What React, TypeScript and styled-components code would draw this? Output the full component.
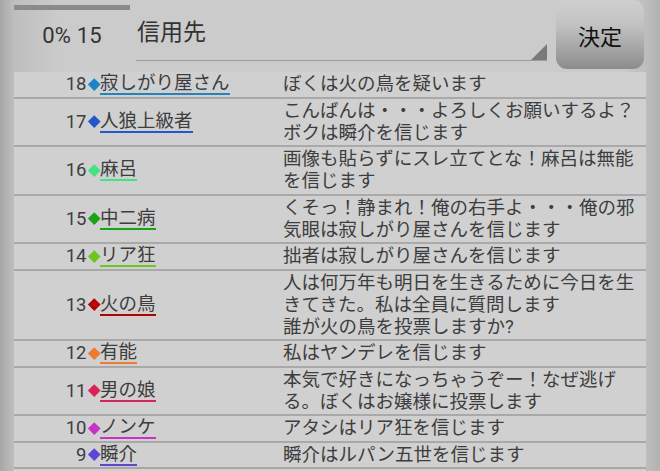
import styled, { createGlobalStyle } from "styled-components";

const GlobalStyle = createGlobalStyle`
  html, body {
    margin: 0;
    padding: 0;
  }
  body {
    font-family: Roboto, "Noto Sans CJK JP", sans-serif;
    background: #c9c9c9;
  }
`;

type Player = {
  no: number;
  name: string;
  color: string;
  lines: string[];
};

const players: Player[] = [
  { no: 18, name: "寂しがり屋さん", color: "#1a86c8", lines: ["ぼくは火の鳥を疑います"] },
  {
    no: 17,
    name: "人狼上級者",
    color: "#2456cc",
    lines: ["こんばんは・・・よろしくお願いするよ？", "ボクは瞬介を信じます"],
  },
  {
    no: 16,
    name: "麻呂",
    color: "#3fe484",
    lines: ["画像も貼らずにスレ立てとな！麻呂は無能", "を信じます"],
  },
  {
    no: 15,
    name: "中二病",
    color: "#17a417",
    lines: ["くそっ！静まれ！俺の右手よ・・・俺の邪", "気眼は寂しがり屋さんを信じます"],
  },
  { no: 14, name: "リア狂", color: "#6cc61e", lines: ["拙者は寂しがり屋さんを信じます"] },
  {
    no: 13,
    name: "火の鳥",
    color: "#b40000",
    lines: [
      "人は何万年も明日を生きるために今日を生",
      "きてきた。私は全員に質問します",
      "誰が火の鳥を投票しますか?",
    ],
  },
  { no: 12, name: "有能", color: "#f07a32", lines: ["私はヤンデレを信じます"] },
  {
    no: 11,
    name: "男の娘",
    color: "#e21e5a",
    lines: ["本気で好きになっちゃうぞー！なぜ逃げ", "る。ぼくはお嬢様に投票します"],
  },
  { no: 10, name: "ノンケ", color: "#c832c8", lines: ["アタシはリア狂を信じます"] },
  { no: 9, name: "瞬介", color: "#5a46de", lines: ["瞬介はルパン五世を信じます"] },
];

export default function App() {
  return (
    <>
      <GlobalStyle />
      <Screen>
        <Header>
          <Status>
            <Progress />
            <Percent>0% 15</Percent>
          </Status>
          <Spinner>
            <SpinnerText>信用先</SpinnerText>
            <SpinnerCorner />
          </Spinner>
          <Decide>決定</Decide>
        </Header>
        <Table>
          {players.map((p) => (
            <Row key={p.no}>
              <Lead>
                {p.no}
                <Diamond $color={p.color} />
              </Lead>
              <NameCell>
                <Name $color={p.color}>{p.name}</Name>
              </NameCell>
              <Message>
                {p.lines.map((l, i) => (
                  <div key={i}>{l}</div>
                ))}
              </Message>
            </Row>
          ))}
          <EmptyRow />
        </Table>
      </Screen>
    </>
  );
}

const Screen = styled.div`
  height: 471px;
  overflow: hidden;
  padding: 0 14px;
  box-sizing: border-box;
  background: linear-gradient(
    to right,
    #a6a6a6 0,
    #bebebe 14px,
    #cbcbcb 60px,
    #cbcbcb calc(100% - 40px),
    #bdbdbd calc(100% - 14px),
    #b2b2b2 100%
  );
`;

const Header = styled.div`
  display: flex;
  height: 72px;
`;

const Status = styled.div`
  width: 116px;
  display: flex;
  flex-direction: column;
  align-items: center;
`;

const Progress = styled.div`
  align-self: stretch;
  height: 5px;
  margin-top: 5px;
  background: #8a8a8a;
`;

const Percent = styled.div`
  margin-top: 13px;
  font-size: 22px;
  line-height: 26px;
  color: #333;
  letter-spacing: 0.2px;
`;

const Spinner = styled.div`
  position: relative;
  flex: 1;
  margin-left: 6px;
  height: 60px;
  border-bottom: 1.5px solid #9c9c9c;
`;

const SpinnerText = styled.div`
  padding: 19px 0 0 1px;
  font-size: 23px;
  line-height: 28px;
  color: #333;
`;

const SpinnerCorner = styled.div`
  position: absolute;
  right: 0;
  bottom: 0;
  width: 16px;
  height: 16px;
  background: #7a7a7a;
  clip-path: polygon(100% 0, 100% 100%, 0 100%);
`;

const Decide = styled.div`
  width: 88px;
  height: 69px;
  margin: 0 2px 0 9px;
  border-radius: 11px;
  background: linear-gradient(#cfcfcf 0%, #c3c3c3 35%, #8c8c8c 100%);
  display: flex;
  align-items: center;
  justify-content: center;
  font-size: 22px;
  color: #111;
`;

const Table = styled.div`
  background: #d0d0d0;
`;

const Row = styled.div`
  display: grid;
  grid-template-columns: 86px 183px 1fr;
  padding: 1px 0 1.5px;
  border-bottom: 2px solid #a9a9a9;
  font-size: 18.5px;
  line-height: 22px;
  color: #3d3d3d;
`;

const EmptyRow = styled.div`
  height: 26px;
`;

const Lead = styled.div`
  display: flex;
  align-items: center;
  justify-content: flex-end;
`;

const Diamond = styled.span<{ $color: string }>`
  display: inline-block;
  width: 8.5px;
  height: 8.5px;
  margin: 0 2px 0 3px;
  background: ${(p) => p.$color};
  transform: rotate(45deg);
`;

const NameCell = styled.div`
  display: flex;
  align-items: center;
`;

const Name = styled.span<{ $color: string }>`
  display: inline-block;
  line-height: 20px;
  border-bottom: 2px solid ${(p) => p.$color};
`;

const Message = styled.div`
  white-space: nowrap;
`;
